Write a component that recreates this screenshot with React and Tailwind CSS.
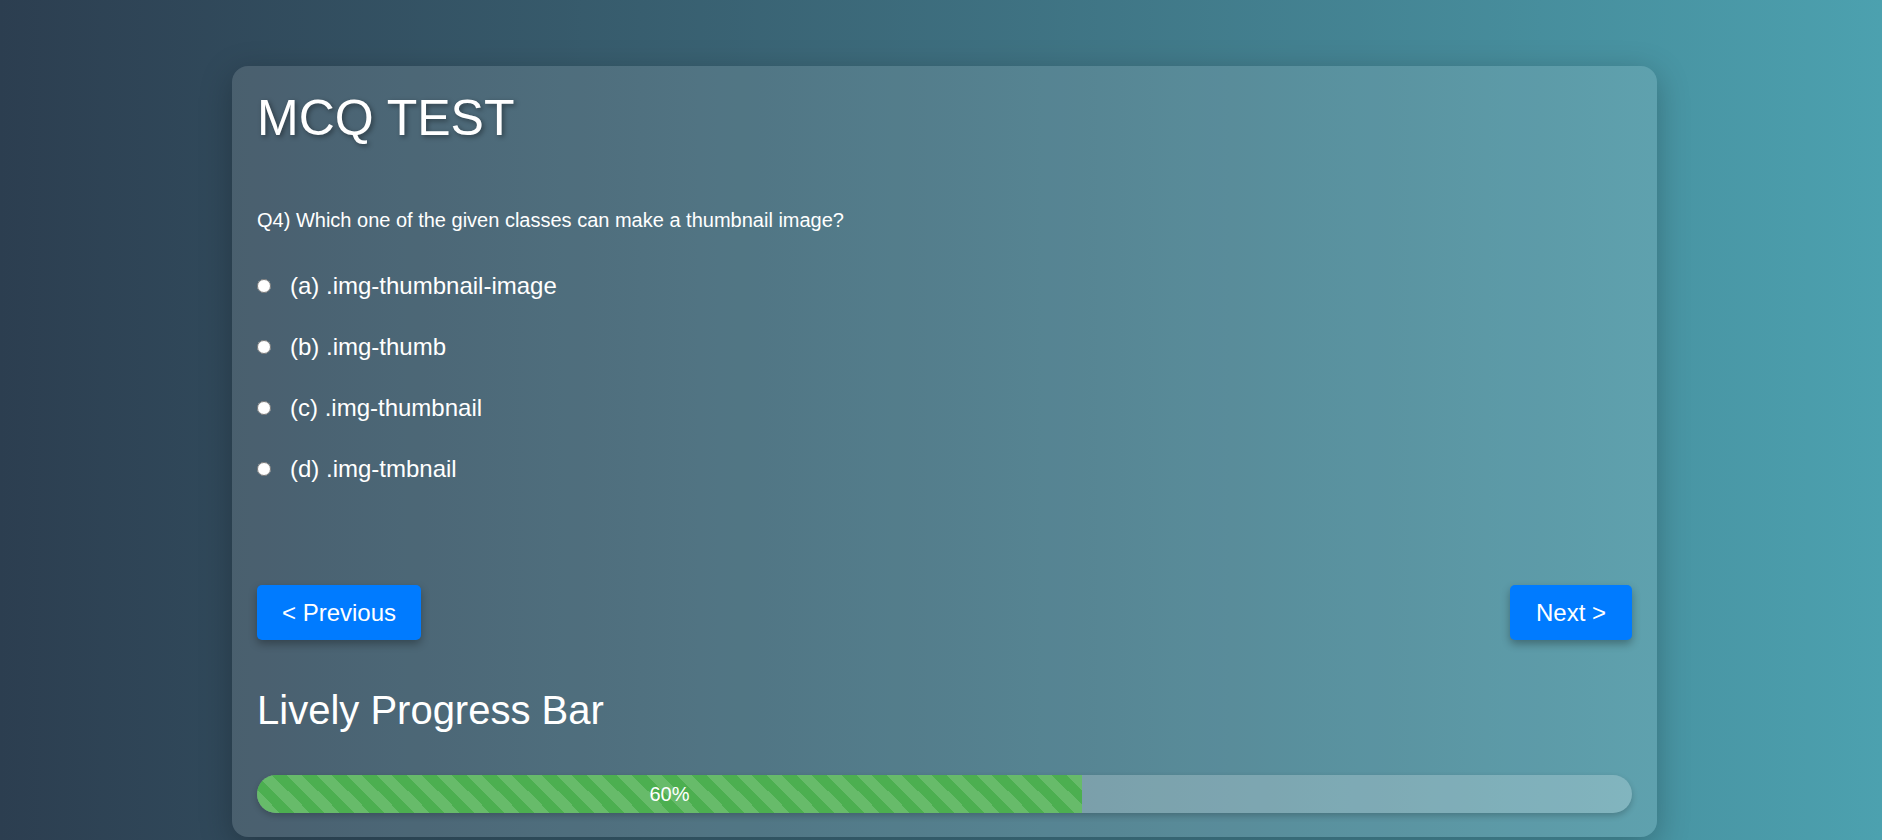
import React, { useState } from 'react';

const options = [
  { key: 'a', label: '(a) .img-thumbnail-image' },
  { key: 'b', label: '(b) .img-thumb' },
  { key: 'c', label: '(c) .img-thumbnail' },
  { key: 'd', label: '(d) .img-tmbnail' }
];

const stripes = {
  backgroundImage:
    'linear-gradient(45deg, rgba(255,255,255,0.15) 25%, transparent 25%, transparent 50%, rgba(255,255,255,0.15) 50%, rgba(255,255,255,0.15) 75%, transparent 75%, transparent)',
  backgroundSize: '30px 30px'
};

const App = () => {
  const [answer, setAnswer] = useState('');
  const progress = 60;

  return (
    <div className="min-h-screen w-full bg-gradient-to-r from-[#2c3e50] to-[#4ca1af] pt-[66px] font-['Liberation_Sans',Arial,sans-serif] text-white">
      <div className="ml-[232px] w-[1425px] rounded-[16px] bg-white/[0.12] px-[25px] pt-[24px] pb-[24px] shadow-[0_8px_32px_rgba(0,0,0,0.25)]">
        <h1 className="text-[50px] leading-[57px] [text-shadow:2px_2px_5px_rgba(0,0,0,0.4)]">MCQ TEST</h1>

        {/* Question */}
        <p className="mt-[62px] text-[20px] leading-[23px]">
          Q4) Which one of the given classes can make a thumbnail image?
        </p>

        <div className="mt-[40px] flex flex-col gap-[33px]">
          {options.map(o => (
            <label key={o.key} className="flex h-[28px] cursor-pointer items-center gap-[19px]">
              <input
                type="radio"
                name="answer"
                value={o.key}
                checked={answer === o.key}
                onChange={() => setAnswer(o.key)}
                className="m-0 h-[14px] w-[14px]"
              />
              <span className="text-[24px] leading-[28px]">{o.label}</span>
            </label>
          ))}
        </div>

        {/* Navigation */}
        <div className="mt-[102px] flex justify-between">
          <button className="h-[55px] rounded-[5px] bg-[#007bff] px-[25px] text-[24px] text-white shadow-[0_4px_8px_rgba(0,0,0,0.3)]">
            &lt; Previous
          </button>
          <button className="h-[55px] rounded-[5px] bg-[#007bff] px-[26px] text-[24px] text-white shadow-[0_4px_8px_rgba(0,0,0,0.3)]">
            Next &gt;
          </button>
        </div>

        <h2 className="mt-[47px] text-[40px] leading-[46px]">Lively Progress Bar</h2>

        <div className="mt-[42px] h-[38px] w-full overflow-hidden rounded-full bg-white/[0.22] shadow-[0_3px_6px_rgba(0,0,0,0.2)]">
          <div
            className="flex h-full items-center justify-center bg-[#4caf50] text-[20px]"
            style={{ width: `${progress}%`, ...stripes }}
          >
            {progress}%
          </div>
        </div>
      </div>
    </div>
  );
};

export default App;
